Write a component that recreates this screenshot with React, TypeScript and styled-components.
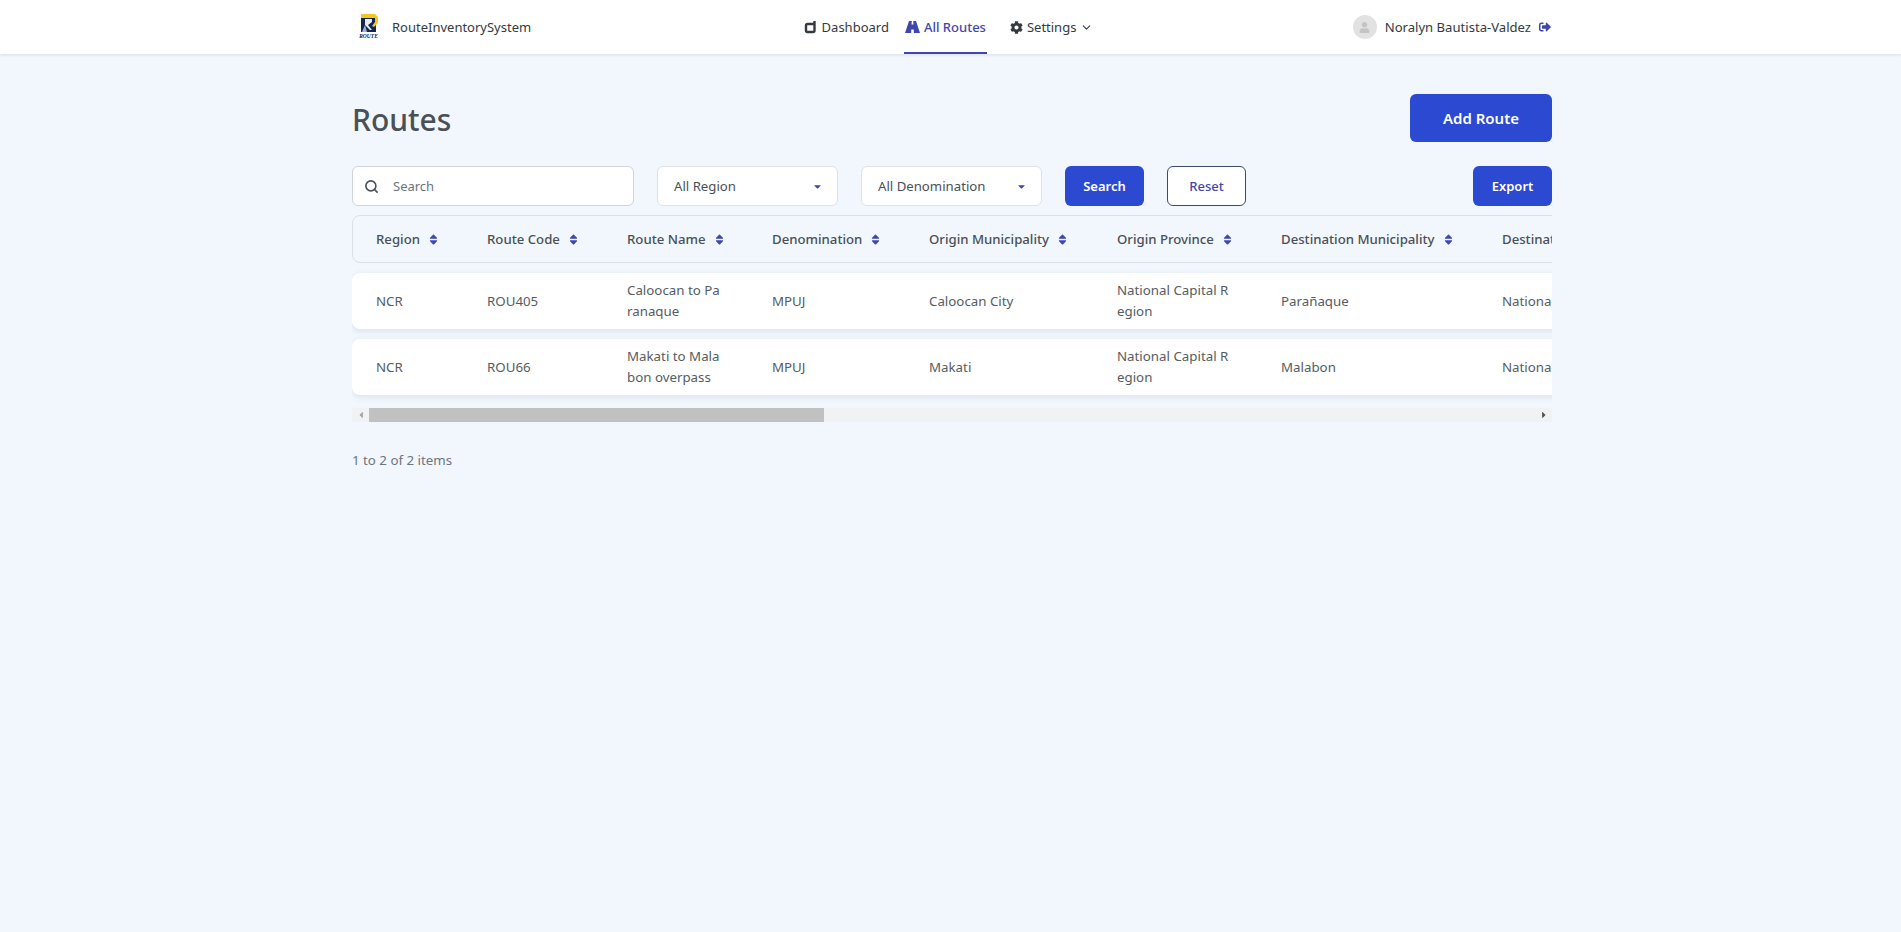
import React from "react";
import styled, { createGlobalStyle } from "styled-components";
import { FaCog, FaSignOutAlt, FaSort, FaCaretDown, FaCaretLeft, FaCaretRight, FaUser } from "react-icons/fa";
import { FiChevronDown, FiSearch } from "react-icons/fi";

const GlobalStyle = createGlobalStyle`
  html, body {
    margin: 0;
    padding: 0;
    background: #f2f7fe;
    font-family: "Noto Sans", "Open Sans", sans-serif;
    color: #495057;
  }
  * {
    box-sizing: border-box;
  }
`;

const Header = styled.header`
  height: 54px;
  background: #fff;
  box-shadow: 0 1px 3px rgba(60, 70, 90, 0.14);
`;

const HeaderInner = styled.div`
  width: 1200px;
  height: 100%;
  margin-left: 352px;
  display: grid;
  grid-template-columns: 1fr auto 1fr;
  align-items: center;
`;

const Brand = styled.div`
  display: flex;
  align-items: center;
  gap: 12px;
  padding-left: 5px;
  font-size: 13px;
  color: #343a40;
`;

const Logo = styled.div`
  width: 23px;
  display: flex;
  flex-direction: column;
  align-items: center;
  line-height: 1;
`;

const LogoText = styled.span`
  font-family: "Liberation Serif", serif;
  font-size: 5.5px;
  font-weight: 700;
  font-style: italic;
  color: #10204a;
  margin-top: 1px;
`;

const Nav = styled.nav`
  display: flex;
  align-items: stretch;
  height: 54px;
  gap: 14px;
  margin-left: -7px;
`;

const NavItem = styled.a<{ $active?: boolean }>`
  display: flex;
  align-items: center;
  gap: 4px;
  padding: 0 1px;
  font-size: 13px;
  font-weight: ${(p) => (p.$active ? 500 : 400)};
  color: ${(p) => (p.$active ? "#3f47ad" : "#343a40")};
  border-bottom: 2px solid ${(p) => (p.$active ? "#3f47ad" : "transparent")};
  border-top: 2px solid transparent;
  & + & + & {
    margin-left: 8px;
  }
  svg {
    flex: none;
  }
`;

const UserBox = styled.div`
  display: flex;
  align-items: center;
  justify-content: flex-end;
  gap: 8px;
  padding-right: 1px;
  font-size: 13.1px;
  color: #343a40;
`;

const Avatar = styled.span`
  width: 24px;
  height: 24px;
  border-radius: 50%;
  background: #e2e2e2;
  color: #c4c4c4;
  display: flex;
  align-items: center;
  justify-content: center;
`;

const Main = styled.main`
  width: 1200px;
  margin-left: 352px;
  padding-top: 40px;
`;

const TitleRow = styled.div`
  display: flex;
  align-items: center;
  justify-content: space-between;
  height: 48px;
`;

const Title = styled.h1`
  margin: 0;
  padding-top: 2px;
  font-size: 30px;
  font-weight: 500;
  color: #495057;
`;

const PrimaryButton = styled.button<{ $large?: boolean }>`
  height: ${(p) => (p.$large ? "48px" : "40px")};
  width: ${(p) => (p.$large ? "142px" : "79px")};
  border: 0;
  border-radius: 6px;
  background: #2b49d1;
  color: #fff;
  font-family: inherit;
  font-size: ${(p) => (p.$large ? "15px" : "13px")};
  font-weight: 600;
`;

const OutlineButton = styled.button`
  height: 40px;
  width: 79px;
  border: 1px solid #3d4a6b;
  border-radius: 6px;
  background: #fff;
  color: #3f47ad;
  font-family: inherit;
  font-size: 13px;
  font-weight: 500;
`;

const Filters = styled.div`
  display: flex;
  align-items: center;
  gap: 23px;
  margin-top: 24px;
`;

const SearchBox = styled.label`
  width: 282px;
  height: 40px;
  display: flex;
  align-items: center;
  gap: 14px;
  padding: 0 11px;
  background: #fff;
  border: 1px solid #ced4da;
  border-radius: 6px;
  color: #495057;
  font-size: 13px;
`;

const SearchInput = styled.input`
  flex: 1;
  min-width: 0;
  padding: 0;
  border: 0;
  outline: 0;
  background: transparent;
  font-family: inherit;
  font-size: 13px;
  &::placeholder {
    color: #6c757d;
  }
`;

const SelectBox = styled.div`
  width: 181px;
  height: 40px;
  display: flex;
  align-items: center;
  justify-content: space-between;
  padding: 0 14px 0 16px;
  background: #fff;
  border: 1px solid #dde2e8;
  border-radius: 6px;
  font-size: 13.2px;
  color: #495057;
  svg {
    color: #3f47ad;
  }
`;

const ExportSlot = styled.div`
  margin-left: auto;
`;

const TableScroll = styled.div`
  margin-top: 9px;
  overflow: hidden;
  padding-bottom: 8px;
`;

const ScrollBar = styled.div`
  height: 14px;
  margin-top: 5px;
  display: flex;
  align-items: center;
  background: #f1f2f4;
`;

const ScrollArrow = styled.span<{ $dark?: boolean }>`
  flex: none;
  width: 17px;
  display: flex;
  justify-content: center;
  color: ${(p) => (p.$dark ? "#505050" : "#a3a3a3")};
`;

const ScrollThumb = styled.div`
  width: 455px;
  height: 14px;
  background: #c1c1c1;
`;

const ScrollRest = styled.div`
  flex: 1;
`;

const columns = "111px 140px 145px 157px 188px 164px 221px 1fr";

const TableHead = styled.div`
  width: 3075px;
  height: 48px;
  display: grid;
  grid-template-columns: ${columns};
  align-items: center;
  border: 1px solid #dbe1e8;
  border-radius: 8px;
  font-size: 13.2px;
  font-weight: 500;
  color: #495057;
`;

const HeadCell = styled.div`
  display: flex;
  align-items: center;
  gap: 7px;
  padding: 0 0 0 23px;
  svg {
    color: #3f47ad;
  }
`;

const TableRow = styled.div`
  width: 3075px;
  height: 56px;
  margin-top: 10px;
  display: grid;
  grid-template-columns: ${columns};
  align-items: center;
  background: #fff;
  border-radius: 8px;
  box-shadow: 0 2px 6px rgba(60, 70, 90, 0.12);
  font-size: 13.3px;
  line-height: 21px;
  color: #555c63;
`;

const Cell = styled.div`
  padding: 0 24px;
  word-break: break-all;
`;

const Summary = styled.p`
  margin: 29px 0 0;
  font-size: 13.3px;
  color: #6c757d;
`;

const headings = [
  "Region",
  "Route Code",
  "Route Name",
  "Denomination",
  "Origin Municipality",
  "Origin Province",
  "Destination Municipality",
  "Destination Province",
];

const routes = [
  ["NCR", "ROU405", "Caloocan to Paranaque", "MPUJ", "Caloocan City", "National Capital Region", "Parañaque", "National Capital Region"],
  ["NCR", "ROU66", "Makati to Malabon overpass", "MPUJ", "Makati", "National Capital Region", "Malabon", "National Capital Region"],
];

const DashboardIcon = () => (
  <svg width="14" height="14" viewBox="0 0 14 14" fill="none" stroke="currentColor" strokeWidth="2.4">
    <path d="M10 4H3.500A1.500 1.500 0 0 0 2 5.500V10.500A1.500 1.500 0 0 0 3.500 12h5.500a1.500 1.500 0 0 0 1.500-1.500V1" />
  </svg>
);

const RoadIcon = () => (
  <svg width="15" height="12" viewBox="0 0 15 12" fill="currentColor">
    <path d="M4 0h2.800l-.3 3.500h2l-.3-3.500H11l4 12H8.900l-.2-3.500H6.300L6.100 12H0z" />
  </svg>
);

const LogoMark = () => (
  <svg width="20" height="19" viewBox="0 0 20 19">
    <rect x="2" y="2" width="15" height="16" fill="#14264f" />
    <path d="M2 0h14l3 3v6l-4 4-2-1 3-4V4H2z" fill="#f2c81e" />
    <path d="M6 5h7v3l-4 3 4 5h-2L6 11z" fill="#e8edf5" />
    <path d="M3 18l3-7 2 7z" fill="#9fb0cc" />
  </svg>
);

export default function App() {
  return (
    <>
      <GlobalStyle />
      <Header>
        <HeaderInner>
          <Brand>
            <Logo>
              <LogoMark />
              <LogoText>ROUTE</LogoText>
            </Logo>
            RouteInventorySystem
          </Brand>
          <Nav>
            <NavItem>
              <DashboardIcon />
              Dashboard
            </NavItem>
            <NavItem $active>
              <RoadIcon />
              All Routes
            </NavItem>
            <NavItem>
              <FaCog size={13} />
              Settings
              <FiChevronDown size={13} />
            </NavItem>
          </Nav>
          <UserBox>
            <Avatar>
              <FaUser size={11} />
            </Avatar>
            Noralyn Bautista-Valdez
            <FaSignOutAlt size={12} color="#3f47ad" />
          </UserBox>
        </HeaderInner>
      </Header>
      <Main>
        <TitleRow>
          <Title>Routes</Title>
          <PrimaryButton $large>Add Route</PrimaryButton>
        </TitleRow>
        <Filters>
          <SearchBox>
            <FiSearch size={15} strokeWidth={2.6} />
            <SearchInput placeholder="Search" />
          </SearchBox>
          <SelectBox>
            All Region
            <FaCaretDown size={11} />
          </SelectBox>
          <SelectBox>
            All Denomination
            <FaCaretDown size={11} />
          </SelectBox>
          <PrimaryButton>Search</PrimaryButton>
          <OutlineButton>Reset</OutlineButton>
          <ExportSlot>
            <PrimaryButton>Export</PrimaryButton>
          </ExportSlot>
        </Filters>
        <TableScroll>
          <TableHead>
            {headings.map((heading) => (
              <HeadCell key={heading}>
                {heading}
                <FaSort size={13} />
              </HeadCell>
            ))}
          </TableHead>
          {routes.map((route) => (
            <TableRow key={route[1]}>
              {route.map((value, index) => (
                <Cell key={index}>{value}</Cell>
              ))}
            </TableRow>
          ))}
        </TableScroll>
        <ScrollBar>
          <ScrollArrow>
            <FaCaretLeft size={10} />
          </ScrollArrow>
          <ScrollThumb />
          <ScrollRest />
          <ScrollArrow $dark>
            <FaCaretRight size={10} />
          </ScrollArrow>
        </ScrollBar>
        <Summary>1 to 2 of 2 items</Summary>
      </Main>
    </>
  );
}
